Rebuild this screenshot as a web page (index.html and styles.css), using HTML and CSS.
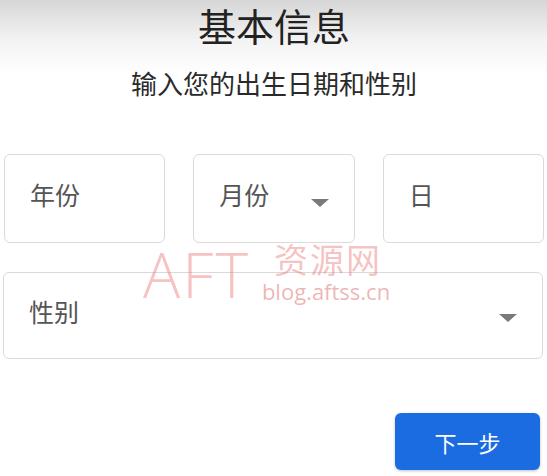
FILE: index.html
```html
<!DOCTYPE html>
<html lang="zh">
<head>
<meta charset="utf-8">
<link rel="stylesheet" href="styles.css">
</head>
<body>
<div class="page">
  <h1 class="title">基本信息</h1>
  <p class="subtitle">输入您的出生日期和性别</p>
  <div class="date-row">
    <div class="field"><span class="label">年份</span></div>
    <div class="field select"><span class="label">月份</span><span class="arrow"></span></div>
    <div class="field"><span class="label">日</span></div>
  </div>
  <div class="field select gender"><span class="label">性别</span><span class="arrow"></span></div>
  <div class="actions">
    <button class="next">下一步</button>
  </div>
  <div class="watermark">
    <span class="wm-aft">AFT</span>
    <span class="wm-right">
      <span class="wm-cn">资源网</span>
      <span class="wm-url">blog.aftss.cn</span>
    </span>
  </div>
</div>
</body>
</html>
```
FILE: styles.css
```css
* { box-sizing: border-box; }
html, body { margin: 0; padding: 0; }
body {
  width: 547px;
  height: 476px;
  overflow: hidden;
  font-family: "Noto Sans CJK SC", "Noto Sans", sans-serif;
  background: linear-gradient(#d6d6d6 0px, #f3f3f3 40px, #ffffff 75px);
}
.page {
  position: relative;
  padding: 3px 3px 0 4px;
}
.title {
  margin: 0;
  text-align: center;
  font-size: 38px;
  line-height: 44px;
  font-weight: 400;
  color: #222;
}
.subtitle {
  margin: 19px 0 0;
  text-align: center;
  font-size: 26px;
  line-height: 34px;
  color: #2a2a2a;
}
.date-row {
  margin-top: 54px;
  display: grid;
  grid-template-columns: 1fr 1fr 1fr;
  column-gap: 28px;
}
.field {
  height: 89px;
  border: 1px solid #dadada;
  border-radius: 6px;
  background: #fff;
  display: flex;
  align-items: center;
  padding: 0 25px 10px;
}
.label {
  font-size: 25px;
  color: #555;
}
.select { justify-content: space-between; }
.arrow {
  width: 0;
  height: 0;
  border-left: 9px solid transparent;
  border-right: 9px solid transparent;
  border-top: 8px solid #7a7a7a;
  margin-top: 18px;
}
.gender {
  margin-top: 29px;
  height: 87px;
  margin-left: -1px;
  margin-right: 1px;
}
.gender .arrow { margin-top: 14px; }
.actions {
  margin-top: 54px;
  display: flex;
  justify-content: flex-end;
  padding-right: 4px;
}
.next {
  width: 145px;
  height: 57px;
  border: none;
  border-radius: 6px;
  background: #1a6ce0;
  color: #fff;
  font-family: "Noto Sans CJK SC", sans-serif;
  font-size: 22px;
  padding: 0;
  box-shadow: 0 1px 3px rgba(0,0,0,0.25);
}
.watermark {
  position: absolute;
  left: 143px;
  top: 243px;
  display: flex;
  align-items: flex-start;
  color: rgba(236, 120, 120, 0.45);
  pointer-events: none;
}
.wm-aft {
  font-family: "Open Sans", "Noto Sans", sans-serif;
  font-weight: 300;
  font-size: 62px;
  line-height: 62px;
  letter-spacing: 2px;
}
.wm-right {
  display: flex;
  flex-direction: column;
  margin-left: 12px;
}
.wm-cn {
  font-size: 34px;
  line-height: 40px;
  letter-spacing: 2px;
  margin-left: 12px;
  margin-top: -4px;
}
.wm-url {
  font-family: "Open Sans", "Noto Sans", sans-serif;
  font-size: 22px;
  line-height: 26px;
  margin-top: -1px;
  color: rgba(220, 110, 110, 0.5);
}
```
